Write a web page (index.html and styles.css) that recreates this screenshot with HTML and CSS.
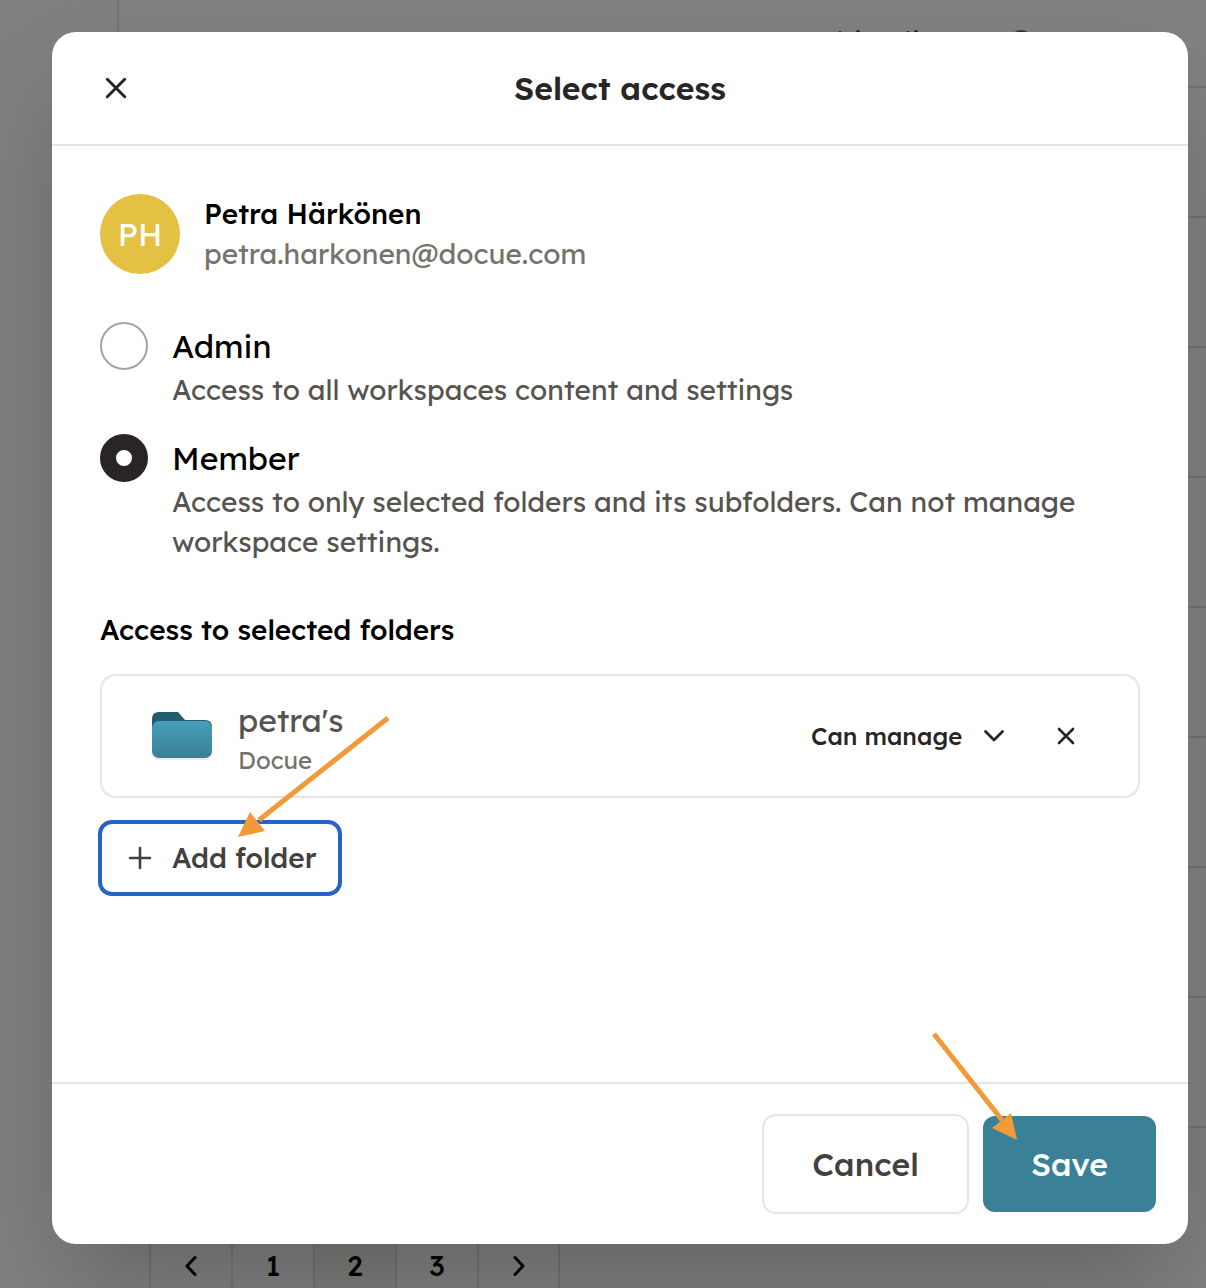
FILE: index.html
```html
<!DOCTYPE html>
<html lang="en">
<head>
  <meta charset="utf-8">
  <meta name="viewport" content="width=device-width, initial-scale=1">
  <title>Select access</title>
  <link rel="stylesheet" href="styles.css">
</head>
<body>
  <div class="app" inert>
    <aside class="sidebar"></aside>
    <main class="content">
      <div class="list">
        <div class="list-head">
          <svg class="head-mark" width="200" height="20" viewBox="0 0 200 20" aria-hidden="true">
            <g fill="#2b2828"><circle cx="8" cy="3" r="2"/><circle cx="26" cy="2" r="2"/><circle cx="76" cy="3" r="2"/><circle cx="84" cy="2" r="2"/></g>
            <circle cx="189" cy="11" r="10" fill="none" stroke="#3c3836" stroke-width="2"/>
          </svg>
        </div>
        <div class="list-row"></div>
        <div class="list-row"></div>
        <div class="list-row"></div>
        <div class="list-row"></div>
        <div class="list-row"></div>
        <div class="list-row"></div>
        <div class="list-row"></div>
        <div class="list-row"></div>
      </div>
      <nav class="pager" aria-label="Pages">
        <button class="page" type="button" aria-label="Previous"><svg width="12" height="20" viewBox="0 0 12 20"><path d="M10 1.500 2 10l8 8.500"/></svg></button>
        <button class="page" type="button">1</button>
        <button class="page page-current" type="button">2</button>
        <button class="page" type="button">3</button>
        <button class="page" type="button" aria-label="Next"><svg width="12" height="20" viewBox="0 0 12 20"><path d="M2 1.500 10 10l-8 8.500"/></svg></button>
      </nav>
    </main>
  </div>

  <div class="overlay">
    <form class="dialog" role="dialog" aria-modal="true" aria-labelledby="dialog-title">
      <header class="dialog-header">
        <button class="icon-button" type="button" aria-label="Close">
          <svg width="20" height="20" viewBox="0 0 20 20"><path d="M1.300 1.300l17.400 17.400M18.700 1.300 1.300 18.700" stroke-width="3"/></svg>
        </button>
        <h1 class="dialog-title" id="dialog-title">Select access</h1>
      </header>

      <div class="dialog-body">
        <div class="person">
          <div class="avatar" aria-hidden="true">PH</div>
          <div>
            <div class="person-name">Petra Härkönen</div>
            <div class="person-email">petra.harkonen@docue.com</div>
          </div>
        </div>

        <div class="roles" role="radiogroup" aria-label="Role">
          <label class="role">
            <input class="radio" type="radio" name="role" value="admin">
            <span>
              <span class="role-name">Admin</span>
              <span class="role-text">Access to all workspaces content and settings</span>
            </span>
          </label>
          <label class="role">
            <input class="radio" type="radio" name="role" value="member" checked>
            <span>
              <span class="role-name">Member</span>
              <span class="role-text">Access to only selected folders and its subfolders. Can not manage workspace settings.</span>
            </span>
          </label>
        </div>

        <section class="folders">
          <h2 class="folders-title">Access to selected folders</h2>
          <div class="folder">
            <svg class="folder-icon" width="64" height="52" viewBox="0 0 64 52" aria-hidden="true">
              <defs>
                <linearGradient id="folder-front" x1="0" y1="0" x2="0" y2="1">
                  <stop offset="0" stop-color="#479fbc"/><stop offset="1" stop-color="#3a7f95"/>
                </linearGradient>
              </defs>
              <rect x="2" y="13" width="60" height="37" rx="7" fill="#000" opacity=".08"/>
              <path d="M2 9q0-7 7-7h19l7 8h20q7 0 7 7v12H2z" fill="#255d70"/>
              <rect x="2" y="11" width="60" height="37" rx="7" fill="url(#folder-front)"/>
            </svg>
            <div class="folder-info">
              <div class="folder-name">petra's</div>
              <div class="folder-space">Docue</div>
            </div>
            <div class="permission">
              <select class="permission-select" aria-label="Permission for petra's">
                <option>Can manage</option>
                <option>Can view</option>
              </select>
              <svg class="permission-chevron" width="20" height="12" viewBox="0 0 20 12" aria-hidden="true"><path d="M1.500 1.500 10 10l8.500-8.500" stroke-width="2.800"/></svg>
            </div>
            <button class="icon-button" type="button" aria-label="Remove folder">
              <svg width="16" height="16" viewBox="0 0 16 16"><path d="M1 1l14 14M15 1 1 15" stroke-width="2.600"/></svg>
            </button>
          </div>
          <div class="anchor">
            <button class="button-add" type="button">
              <svg width="22" height="22" viewBox="0 0 22 22" aria-hidden="true"><path d="M11 1v20M1 11h20" stroke-width="2.600"/></svg>
              <span>Add folder</span>
            </button>
            <svg class="arrow arrow-add" width="160" height="130" viewBox="0 0 160 130" aria-hidden="true">
              <path d="M154 8 25 110" stroke="#f29938" stroke-width="5" fill="none"/>
              <path d="M4 127 16 102l15 19z" fill="#f29938"/>
            </svg>
          </div>
        </section>
      </div>

      <footer class="dialog-footer">
        <button class="button button-cancel" type="button">Cancel</button>
        <div class="anchor">
          <button class="button button-save" type="submit">Save</button>
          <svg class="arrow arrow-save" width="100" height="120" viewBox="0 0 100 120" aria-hidden="true">
            <path d="M11 14 79 100" stroke="#f29938" stroke-width="5" fill="none"/>
            <path d="M94 120 69 108l19-15z" fill="#f29938"/>
          </svg>
        </div>
      </footer>
    </form>
  </div>
</body>
</html>
```
FILE: styles.css
```css
* {
  box-sizing: border-box;
}

body {
  margin: 0;
  position: relative;
  font-family: Lexend, Inter, "Liberation Sans", sans-serif;
  font-size: 28px;
  line-height: 40px;
  color: #000;
}

button,
select {
  margin: 0;
  padding: 0;
  border: 0;
  background: none;
  font: inherit;
  color: inherit;
}

svg {
  display: block;
  flex: none;
  overflow: visible;
}

svg path {
  stroke-linecap: round;
  stroke-linejoin: round;
}

/* Page behind the dialog, already dimmed */

.app {
  position: absolute;
  inset: 0;
  display: flex;
  overflow: hidden;
  background: #7f7f7d;
}

.sidebar {
  flex: none;
  width: 117px;
}

.content {
  flex: 1;
}

.list {
  border-left: 2px solid #727272;
  background: #808080;
}

.list-head {
  display: flex;
  justify-content: flex-end;
  height: 88px;
  padding: 30px 174px 0 0;
  border-bottom: 2px solid #727272;
}

.list-row {
  height: 130px;
  border-bottom: 2px solid #727272;
}

.pager {
  display: flex;
  width: 411px;
  margin: 98px 0 0 32px;
  border: 2px solid #727271;
  border-left: 0;
  background: #808080;
}

.page {
  flex: none;
  display: flex;
  align-items: center;
  justify-content: center;
  width: 82px;
  height: 76px;
  border-left: 2px solid #727271;
  font-weight: 500;
}

.page-current {
  background: #7b7b79;
}

.page path {
  fill: none;
  stroke: #000;
  stroke-width: 3;
}

/* Dialog */

.overlay {
  position: relative;
  display: flex;
  min-height: 100vh;
  padding: 32px 18px 44px 52px;
  overflow: hidden;
}

.dialog {
  flex: 1;
  display: flex;
  flex-direction: column;
  border-radius: 24px;
  background: #fff;
  box-shadow: 0 50px 100px -24px rgba(0, 0, 0, 0.25);
}

.dialog-header {
  display: grid;
  grid-template-columns: 48px 1fr 48px;
  align-items: center;
  padding: 32px 40px;
  border-bottom: 2px solid #e5e5e5;
}

.dialog-title {
  margin: 0;
  font-size: 32px;
  line-height: 48px;
  font-weight: 600;
  text-align: center;
  color: #292524;
}

.icon-button {
  display: flex;
  align-items: center;
  justify-content: center;
  width: 48px;
  height: 48px;
}

.icon-button path,
.permission-chevron path {
  fill: none;
  stroke: #292524;
}

.dialog-body {
  flex: 1;
  padding: 48px;
}

.person {
  display: flex;
  gap: 24px;
}

.avatar {
  display: flex;
  align-items: center;
  justify-content: center;
  width: 80px;
  height: 80px;
  border-radius: 50%;
  background: #e4c043;
  font-size: 32px;
  color: #fff;
}

.person-name {
  font-weight: 500;
}

.person-email {
  color: #78716c;
}

.roles {
  display: grid;
  gap: 24px;
  margin-top: 48px;
}

.role {
  display: flex;
  gap: 24px;
}

.radio {
  flex: none;
  appearance: none;
  width: 48px;
  height: 48px;
  margin: 0;
  border: 2px solid #a8a29e;
  border-radius: 50%;
  background: #fff;
}

.radio:checked {
  border: 16px solid #292524;
}

.role-name {
  display: block;
  font-size: 32px;
  line-height: 48px;
}

.role-text {
  display: block;
  color: #57534e;
}

.folders {
  margin-top: 48px;
}

.folders-title {
  margin: 0 0 24px;
  font-size: 28px;
  line-height: 40px;
  font-weight: 500;
}

.folder {
  display: flex;
  align-items: center;
  padding: 20px 48px;
  border: 2px solid #e5e5e5;
  border-radius: 16px;
}

.folder-info {
  flex: 1;
  margin-left: 24px;
}

.folder-name {
  font-size: 32px;
  line-height: 48px;
  color: #57534e;
}

.folder-space {
  font-size: 24px;
  line-height: 32px;
  color: #78716c;
}

.permission {
  display: grid;
  align-items: center;
  margin-right: 24px;
}

.permission-select {
  grid-area: 1 / 1;
  appearance: none;
  width: 207px;
  height: 48px;
  font-size: 24px;
  font-weight: 500;
  color: #292524;
}

.permission-chevron {
  grid-area: 1 / 1;
  justify-self: end;
  margin-right: 14px;
  pointer-events: none;
}

.anchor {
  position: relative;
}

.button-add {
  display: flex;
  align-items: center;
  gap: 21px;
  min-width: 240px;
  height: 72px;
  margin-top: 24px;
  padding: 0 24px 0 29px;
  border-radius: 12px;
  outline: 4px solid #2563cb;
  outline-offset: -2px;
  font-weight: 500;
  color: #44403c;
}

.button-add path {
  fill: none;
  stroke: #44403c;
}

.arrow {
  position: absolute;
  pointer-events: none;
}

.arrow path {
  stroke-linecap: butt;
}

.arrow-add {
  left: 134px;
  top: -112px;
}

.arrow-save {
  left: -60px;
  top: -96px;
}

.dialog-footer {
  display: flex;
  justify-content: flex-end;
  gap: 16px;
  padding: 32px;
  border-top: 2px solid #e5e5e5;
}

.button {
  height: 96px;
  padding: 0 40px;
  border-radius: 12px;
  font-size: 32px;
  font-weight: 500;
}

.button-cancel {
  min-width: 203px;
  box-shadow: 0 0 0 2px #e5e5e5;
  color: #44403c;
}

.button-save {
  display: block;
  min-width: 173px;
  background: #3a8096;
  color: #fff;
}
```
